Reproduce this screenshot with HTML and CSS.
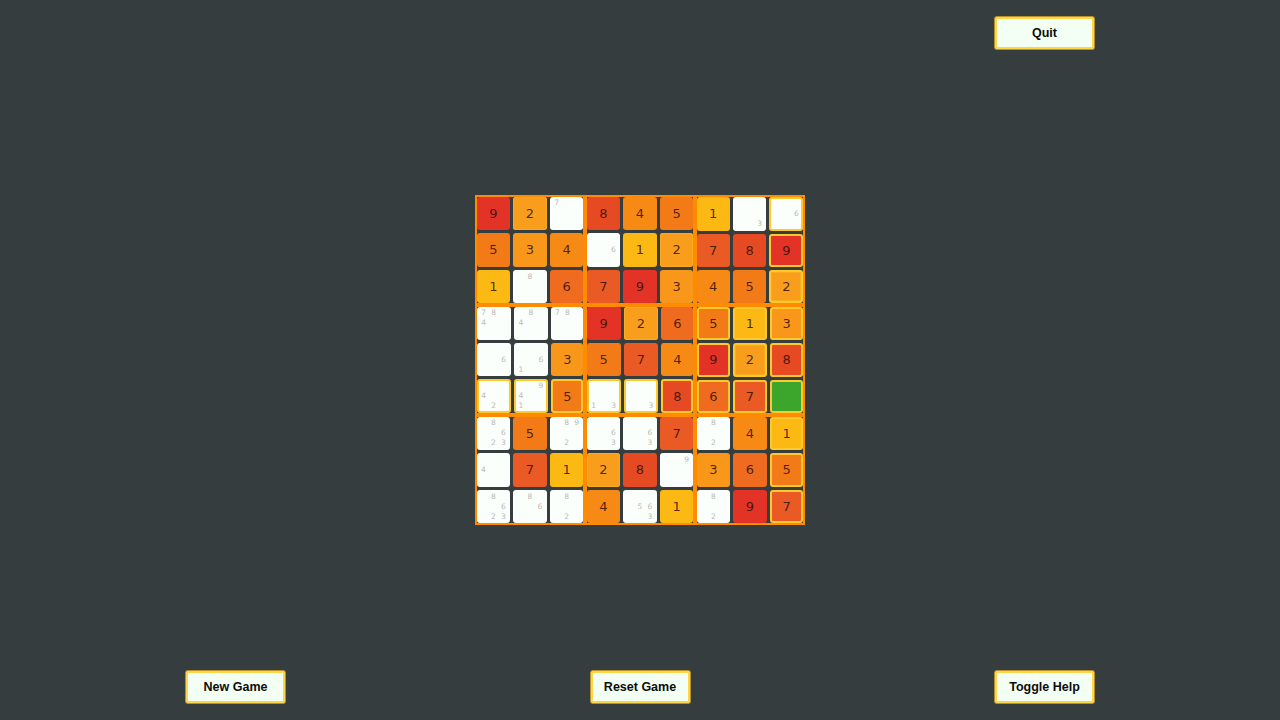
FILE: index.html
```html
<!DOCTYPE html>
<html lang="en">
    <head>
        <meta charset="utf-8">
        <title>Sudoku</title>
        <link rel="stylesheet" href="styles.css">
    </head>
    <body>
        <div class="top-bar">
            <button class="btn">Quit</button>
        </div>
        <div class="board">
            <div class="box">
                <div class="cell v9">9</div>
                <div class="cell v2">2</div>
                <div class="cell notes"><span class="n7">7</span></div>
                <div class="cell v5">5</div>
                <div class="cell v3">3</div>
                <div class="cell v4">4</div>
                <div class="cell v1">1</div>
                <div class="cell notes"><span class="n8">8</span></div>
                <div class="cell v6">6</div>
            </div>
            <div class="box">
                <div class="cell v8">8</div>
                <div class="cell v4">4</div>
                <div class="cell v5">5</div>
                <div class="cell notes"><span class="n6">6</span></div>
                <div class="cell v1">1</div>
                <div class="cell v2">2</div>
                <div class="cell v7">7</div>
                <div class="cell v9">9</div>
                <div class="cell v3">3</div>
            </div>
            <div class="box">
                <div class="cell v1">1</div>
                <div class="cell notes"><span class="n3">3</span></div>
                <div class="cell notes hl"><span class="n6">6</span></div>
                <div class="cell v7">7</div>
                <div class="cell v8">8</div>
                <div class="cell v9 hl">9</div>
                <div class="cell v4">4</div>
                <div class="cell v5">5</div>
                <div class="cell v2 hl">2</div>
            </div>
            <div class="box">
                <div class="cell notes"><span class="n7">7</span><span class="n8">8</span><span class="n4">4</span></div>
                <div class="cell notes"><span class="n8">8</span><span class="n4">4</span></div>
                <div class="cell notes"><span class="n7">7</span><span class="n8">8</span></div>
                <div class="cell notes"><span class="n6">6</span></div>
                <div class="cell notes"><span class="n6">6</span><span class="n1">1</span></div>
                <div class="cell v3">3</div>
                <div class="cell notes hl"><span class="n4">4</span><span class="n2">2</span></div>
                <div class="cell notes hl"><span class="n9">9</span><span class="n4">4</span><span class="n1">1</span></div>
                <div class="cell v5 hl">5</div>
            </div>
            <div class="box">
                <div class="cell v9">9</div>
                <div class="cell v2">2</div>
                <div class="cell v6">6</div>
                <div class="cell v5">5</div>
                <div class="cell v7">7</div>
                <div class="cell v4">4</div>
                <div class="cell notes hl"><span class="n1">1</span><span class="n3">3</span></div>
                <div class="cell notes hl"><span class="n3">3</span></div>
                <div class="cell v8 hl">8</div>
            </div>
            <div class="box">
                <div class="cell v5 hl">5</div>
                <div class="cell v1 hl">1</div>
                <div class="cell v3 hl">3</div>
                <div class="cell v9 hl">9</div>
                <div class="cell v2 hl">2</div>
                <div class="cell v8 hl">8</div>
                <div class="cell v6 hl">6</div>
                <div class="cell v7 hl">7</div>
                <div class="cell selected hl"></div>
            </div>
            <div class="box">
                <div class="cell notes"><span class="n8">8</span><span class="n6">6</span><span class="n2">2</span><span class="n3">3</span></div>
                <div class="cell v5">5</div>
                <div class="cell notes"><span class="n8">8</span><span class="n9">9</span><span class="n2">2</span></div>
                <div class="cell notes"><span class="n4">4</span></div>
                <div class="cell v7">7</div>
                <div class="cell v1">1</div>
                <div class="cell notes"><span class="n8">8</span><span class="n6">6</span><span class="n2">2</span><span class="n3">3</span></div>
                <div class="cell notes"><span class="n8">8</span><span class="n6">6</span></div>
                <div class="cell notes"><span class="n8">8</span><span class="n2">2</span></div>
            </div>
            <div class="box">
                <div class="cell notes"><span class="n6">6</span><span class="n3">3</span></div>
                <div class="cell notes"><span class="n6">6</span><span class="n3">3</span></div>
                <div class="cell v7">7</div>
                <div class="cell v2">2</div>
                <div class="cell v8">8</div>
                <div class="cell notes"><span class="n9">9</span></div>
                <div class="cell v4">4</div>
                <div class="cell notes"><span class="n5">5</span><span class="n6">6</span><span class="n3">3</span></div>
                <div class="cell v1">1</div>
            </div>
            <div class="box">
                <div class="cell notes"><span class="n8">8</span><span class="n2">2</span></div>
                <div class="cell v4">4</div>
                <div class="cell v1 hl">1</div>
                <div class="cell v3">3</div>
                <div class="cell v6">6</div>
                <div class="cell v5 hl">5</div>
                <div class="cell notes"><span class="n8">8</span><span class="n2">2</span></div>
                <div class="cell v9">9</div>
                <div class="cell v7 hl">7</div>
            </div>
        </div>
        <div class="bottom-bar">
            <button class="btn">New Game</button>
            <button class="btn">Reset Game</button>
            <button class="btn">Toggle Help</button>
        </div>
    </body>
</html>
```

FILE: styles.css
```css
* {
    margin: 0;
    padding: 0;
    box-sizing: border-box;
}
:root {
    --bg-color: #353d3f;
    --line-color: #ff8c00;
    --hl-color: #ffc92e;
    --note-color: #b8bab8;
    --fg-color: rgba(50, 15, 10, .85);
}
html {
    font-family: "DejaVu Sans", sans-serif;
    background-color: var(--bg-color);
}
body {
    height: 720px;
    padding: 16px 185px;
    display: grid;
    grid-template-rows: auto 1fr auto;
    overflow: hidden;
}
.top-bar {
    display: flex;
    justify-content: flex-end;
}
.bottom-bar {
    display: flex;
    justify-content: space-between;
}
.btn {
    width: 101px;
    height: 34px;
    font-family: "Liberation Sans", Arial, sans-serif;
    font-size: 12.5px;
    font-weight: bold;
    color: #0c0c0c;
    background-color: #f3fff3;
    border: 1px solid #b8902a;
    border-radius: 3px;
    box-shadow: inset 0 0 0 2px #fdd648;
}
.board {
    width: 330px;
    height: 330px;
    place-self: center;
    display: grid;
    grid-template-columns: repeat(3, 110px);
    grid-template-rows: repeat(3, 110px);
}
.box {
    display: grid;
    grid-template-columns: repeat(3, 1fr);
    grid-template-rows: repeat(3, 1fr);
    box-shadow: inset 0 0 0 2px var(--line-color);
}
.cell {
    margin: 1.67px;
    border-radius: 3px;
    display: flex;
    align-items: center;
    justify-content: center;
    font-size: 13px;
    color: var(--fg-color);
}
.cell.hl {
    border: 2px solid var(--hl-color);
}
.v1 { background-color: #fdb913; }
.v2 { background-color: #f99d1c; box-shadow: inset 0 0 0 1px #fbab1c; }
.v3 { background-color: #f9971a; }
.v4 { background-color: #f78a14; }
.v5 { background-color: #f27b17; }
.v6 { background-color: #ee6b1f; }
.v7 { background-color: #e95a24; }
.v8 { background-color: #e64a23; }
.v9 { background-color: #e33226; }
.selected { background-color: #3ca62c; }
.notes {
    display: grid;
    grid-template-columns: repeat(3, 10px);
    grid-template-rows: repeat(3, 10px);
    align-content: center;
    justify-content: center;
    background-color: #fbfffb;
    font-size: 7.5px;
    color: var(--note-color);
}
.notes span {
    text-align: center;
    line-height: 10px;
}
.n1 { grid-area: 3 / 1; }
.n2 { grid-area: 3 / 2; }
.n3 { grid-area: 3 / 3; }
.n4 { grid-area: 2 / 1; }
.n5 { grid-area: 2 / 2; }
.n6 { grid-area: 2 / 3; }
.n7 { grid-area: 1 / 1; }
.n8 { grid-area: 1 / 2; }
.n9 { grid-area: 1 / 3; }
```
